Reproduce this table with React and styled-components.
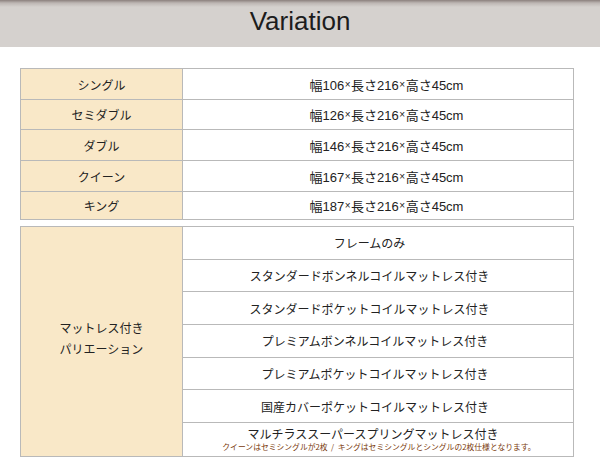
import React from "react";
import styled, { createGlobalStyle } from "styled-components";

const GlobalStyle = createGlobalStyle`
  *, *::before, *::after { box-sizing: border-box; }
  html, body { margin: 0; padding: 0; background: #ffffff; }
  body { font-family: "Noto Sans CJK JP", "Noto Sans", sans-serif; color: #222; }
`;

const Page = styled.div`
  width: 600px;
  height: 476px;
  overflow: hidden;
  background: #fff;
`;

const Header = styled.header`
  height: 47px;
  background: linear-gradient(to bottom, #8b807d 0px, #bdb6b3 3px, #d5d1ce 7px, #d5d1ce 100%);
  text-align: center;
`;

const Title = styled.h1`
  margin: 0;
  font-family: "Liberation Sans", Arial, sans-serif;
  font-weight: 400;
  font-size: 26px;
  line-height: 42px;
  color: #1c1c1c;
`;

const Content = styled.main`
  padding: 21px 26px 0 20px;
  display: flex;
  flex-direction: column;
  gap: 6px;
`;

const Table = styled.section`
  border: 1px solid #b9b9b9;
  display: flex;
  flex-direction: column;
`;

const Row = styled.div`
  display: grid;
  grid-template-columns: 162px 1fr;
  height: ${(p) => p.$h}px;
  border-bottom: 1px solid #b9b9b9;
  &:last-child { border-bottom: none; }
`;

const Label = styled.div`
  background: #f9e8c8;
  border-right: 1px solid #b9b9b9;
  display: flex;
  flex-direction: column;
  align-items: center;
  justify-content: center;
  font-size: 12px;
  line-height: 21px;
  color: #222;
  padding-bottom: ${(p) => p.$pb || 0}px;
`;

const SizeCell = styled.div`
  display: flex;
  align-items: center;
  justify-content: center;
  padding-left: 17px;
  font-family: "Liberation Sans", Arial, "Noto Sans CJK JP", sans-serif;
  font-size: 13px;
  color: #222;
`;

const Times = styled.span`
  font-size: 10px;
  margin: 0 0.5px;
`;

const Group = styled.section`
  border: 1px solid #b9b9b9;
  display: grid;
  grid-template-columns: 162px 1fr;
`;

const OptionList = styled.div`
  display: flex;
  flex-direction: column;
`;

const Option = styled.div`
  height: 32.7px;
  border-bottom: 1px solid #b9b9b9;
  display: flex;
  flex-direction: column;
  align-items: center;
  justify-content: center;
  padding-right: ${(p) => p.$shift || 11}px;
  font-size: 12px;
  color: #222;
  &:last-child { border-bottom: none; }
`;

const OptionMain = styled.span`
  line-height: 14px;
`;

const Note = styled.span`
  font-size: 7.8px;
  line-height: 11px;
  color: #7a3a0c;
  margin-left: 12px;
  white-space: pre;
`;

const sizes = [
  ["シングル", "106", 31],
  ["セミダブル", "126", 30],
  ["ダブル", "146", 31],
  ["クイーン", "167", 31],
  ["キング", "187", 27],
];

const options = [
  "フレームのみ",
  "スタンダードボンネルコイルマットレス付き",
  "スタンダードポケットコイルマットレス付き",
  "プレミアムボンネルコイルマットレス付き",
  "プレミアムポケットコイルマットレス付き",
  "国産カバーポケットコイルマットレス付き",
];

export default function App() {
  return (
    <Page>
      <GlobalStyle />
      <Header>
        <Title>Variation</Title>
      </Header>
      <Content>
        <Table>
          {sizes.map(([name, w, h]) => (
            <Row key={name} $h={h}>
              <Label>{name}</Label>
              <SizeCell>
                幅{w}<Times>×</Times>長さ216<Times>×</Times>高さ45cm
              </SizeCell>
            </Row>
          ))}
        </Table>
        <Group>
          <Label $pb={7}>
            <span>マットレス付き</span>
            <span>パリエーション</span>
          </Label>
          <OptionList>
            {options.map((o, i) => (
              <Option key={o} $shift={i < 3 ? 17 : 6}>
                {o}
              </Option>
            ))}
            <Option $shift={10}>
              <OptionMain>マルチラススーパースプリングマットレス付き</OptionMain>
              <Note>{"クイーンはセミシングルが2枚  /  キングはセミシングルとシングルの2枚仕様となります。"}</Note>
            </Option>
          </OptionList>
        </Group>
      </Content>
    </Page>
  );
}
